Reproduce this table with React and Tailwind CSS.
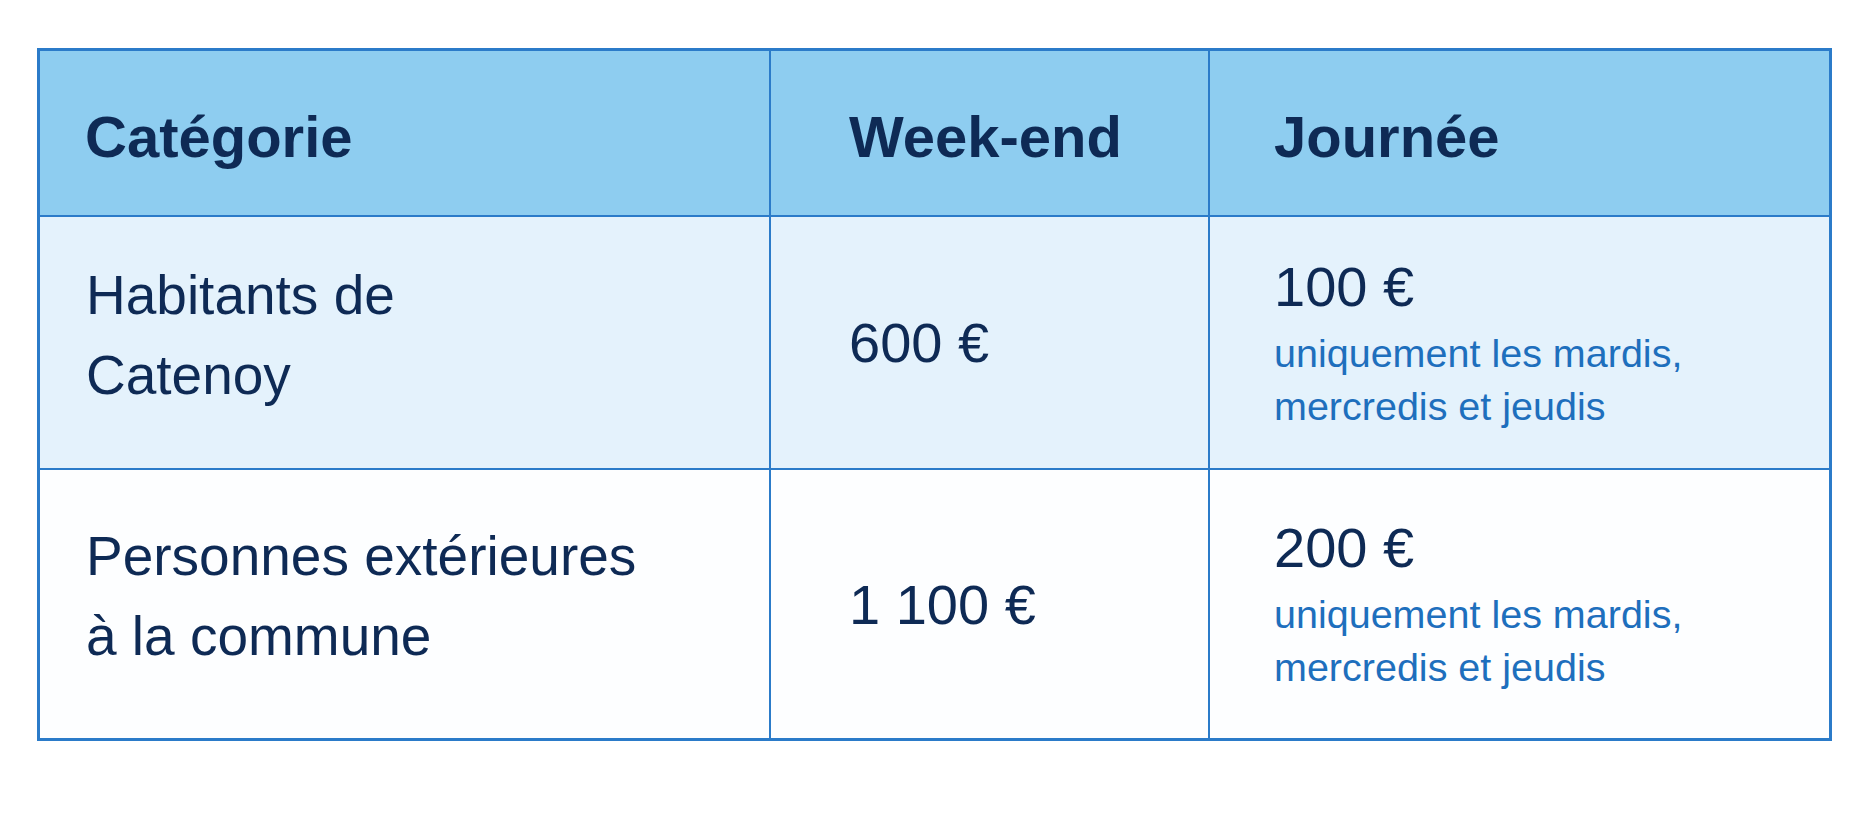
import React from 'react';

const rows = [
    {
        category: ['Habitants de', 'Catenoy'],
        weekend: '600 €',
        day: '100 €',
        bg: 'bg-[#e4f2fc]',
        border: 'border-b-2',
        height: 'h-[253px]',
    },
    {
        category: ['Personnes extérieures', 'à la commune'],
        weekend: '1 100 €',
        day: '200 €',
        bg: 'bg-[#fdfeff]',
        border: '',
        height: 'h-[268px]',
    },
];

const App = () => {
    return (
        <div className="min-h-screen bg-white pt-[48px] pl-[37px] font-['Liberation_Sans',Arial,sans-serif] text-[#0e2a55]">
            <div className="w-[1795px] border-[3px] border-[#2b7bc9]">
                <div className="grid grid-cols-[731px_439px_619px]">
                    {/* header */}
                    <div className="h-[166px] bg-[#8ecdf0] border-r-2 border-b-2 border-[#2b7bc9] flex items-center pl-[45px] pt-[8px]">
                        <span className="text-[58px] font-bold leading-none">Catégorie</span>
                    </div>
                    <div className="h-[166px] bg-[#8ecdf0] border-r-2 border-b-2 border-[#2b7bc9] flex items-center pl-[78px] pt-[8px]">
                        <span className="text-[58px] font-bold leading-none">Week-end</span>
                    </div>
                    <div className="h-[166px] bg-[#8ecdf0] border-b-2 border-[#2b7bc9] flex items-center pl-[64px] pt-[8px]">
                        <span className="text-[58px] font-bold leading-none">Journée</span>
                    </div>

                    {rows.map((row) => (
                        <React.Fragment key={row.weekend}>
                            <div className={`${row.height} ${row.bg} ${row.border} border-r-2 border-[#2b7bc9] flex items-center pl-[46px] pb-[16px]`}>
                                <p className="text-[55px] leading-[80px]">
                                    {row.category[0]}
                                    <br />
                                    {row.category[1]}
                                </p>
                            </div>
                            <div className={`${row.height} ${row.bg} ${row.border} border-r-2 border-[#2b7bc9] flex items-center pl-[78px]`}>
                                <p className="text-[56px] leading-[67px]">{row.weekend}</p>
                            </div>
                            <div className={`${row.height} ${row.bg} ${row.border} border-[#2b7bc9] flex items-center pl-[64px]`}>
                                <div>
                                    <p className="text-[56px] leading-[67px]">{row.day}</p>
                                    <p className="mt-[7px] text-[39.5px] leading-[53px] text-[#1e6fbd]">
                                        uniquement les mardis,
                                        <br />
                                        mercredis et jeudis
                                    </p>
                                </div>
                            </div>
                        </React.Fragment>
                    ))}
                </div>
            </div>
        </div>
    );
};

export default App;
